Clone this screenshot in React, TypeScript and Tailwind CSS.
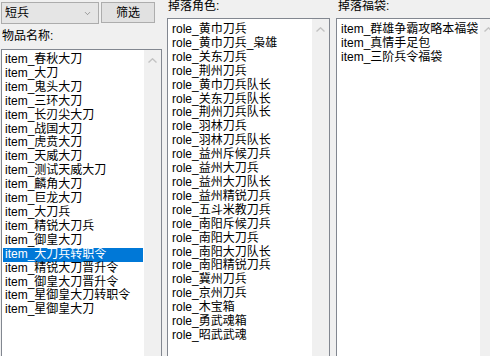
import { ChevronDown } from "lucide-react";

const items = [
  "item_春秋大刀",
  "item_大刀",
  "item_鬼头大刀",
  "item_三环大刀",
  "item_长刃尖大刀",
  "item_战国大刀",
  "item_虎贲大刀",
  "item_天威大刀",
  "item_测试天威大刀",
  "item_麟角大刀",
  "item_巨龙大刀",
  "item_大刀兵",
  "item_精锐大刀兵",
  "item_御皇大刀",
  "item_大刀兵转职令",
  "item_精锐大刀晋升令",
  "item_御皇大刀晋升令",
  "item_星御皇大刀转职令",
  "item_星御皇大刀",
];

const roles = [
  "role_黄巾刀兵",
  "role_黄巾刀兵_枭雄",
  "role_关东刀兵",
  "role_荆州刀兵",
  "role_黄巾刀兵队长",
  "role_关东刀兵队长",
  "role_荆州刀兵队长",
  "role_羽林刀兵",
  "role_羽林刀兵队长",
  "role_益州斥候刀兵",
  "role_益州大刀兵",
  "role_益州大刀队长",
  "role_益州精锐刀兵",
  "role_五斗米教刀兵",
  "role_南阳斥候刀兵",
  "role_南阳大刀兵",
  "role_南阳大刀队长",
  "role_南阳精锐刀兵",
  "role_冀州刀兵",
  "role_京州刀兵",
  "role_木宝箱",
  "role_勇武魂箱",
  "role_昭武武魂",
];

const bags = ["item_群雄争霸攻略本福袋", "item_真情手足包", "item_三阶兵令福袋"];

function ScrollUp() {
  return (
    <div className="w-[17px] shrink-0 bg-[#f0f0f0] flex justify-center pt-[8px]">
      <svg width="9" height="5" viewBox="0 0 9 5" className="block">
        <path d="M0.5 4.5 L4.5 0.8 L8.5 4.5" fill="none" stroke="#c2c2c2" strokeWidth="1.4" />
      </svg>
    </div>
  );
}

function ListBox({
  rows,
  selected,
  className,
  rowClass,
  padClass,
}: {
  rows: string[];
  selected?: number;
  className: string;
  rowClass: string;
  padClass: string;
}) {
  return (
    <div className={`flex border border-[#828790] bg-white ${className}`}>
      <div className={`flex-1 min-w-0 overflow-hidden ${padClass}`}>
        {rows.map((r, i) => (
          <div
            key={i}
            className={`${rowClass} whitespace-nowrap ${
              i === selected ? "bg-[#0078d7] text-white" : "text-black"
            }`}
          >
            {r}
          </div>
        ))}
      </div>
      <ScrollUp />
    </div>
  );
}

export default function App() {
  return (
    <div
      className="w-[490px] h-[356px] overflow-hidden bg-[#f0f0f0] flex items-start text-[12px] text-black"
      style={{ fontFamily: '"Liberation Sans", "Noto Sans CJK SC", sans-serif' }}
    >
      {/* left column */}
      <div className="ml-[1px] w-[161px] shrink-0 flex flex-col">
        <div className="flex items-start mt-[2px]">
          <div className="w-[98px] h-[22px] border border-[#acacac] bg-[#e5e5e5] flex items-center justify-between pl-[3px] pr-[6px]">
            <span className="leading-[14px]">短兵</span>
            <ChevronDown className="h-[9px] w-[9px] text-[#606060]" strokeWidth={1.5} />
          </div>
          <button className="ml-[2px] w-[54px] h-[21px] border border-[#adadad] bg-[#e1e1e1] leading-[14px]">
            筛选
          </button>
        </div>
        <div className="mt-[5px] leading-[14px] pl-[1px]">物品名称:</div>
        <ListBox
          rows={items}
          selected={14}
          className="mt-[6px] h-[320px]"
          rowClass="leading-[13.9px] pl-[2px] mx-[1px]"
          padClass="pt-[3px]"
        />
      </div>

      {/* middle column */}
      <div className="ml-[5px] w-[163px] shrink-0 flex flex-col">
        <div className="leading-[12px] pl-[1px]">掉落角色:</div>
        <ListBox
          rows={roles}
          className="mt-[6px] h-[350px]"
          rowClass="leading-[13.9px] pl-[4px]"
          padClass="pt-[4px]"
        />
      </div>

      {/* right column */}
      <div className="ml-[6px] w-[162px] shrink-0 flex flex-col">
        <div className="leading-[12px] pl-[2px]">掉落福袋:</div>
        <ListBox
          rows={bags}
          className="mt-[6px] h-[350px]"
          rowClass="leading-[13.9px] pl-[4px]"
          padClass="pt-[4px]"
        />
      </div>
    </div>
  );
}
